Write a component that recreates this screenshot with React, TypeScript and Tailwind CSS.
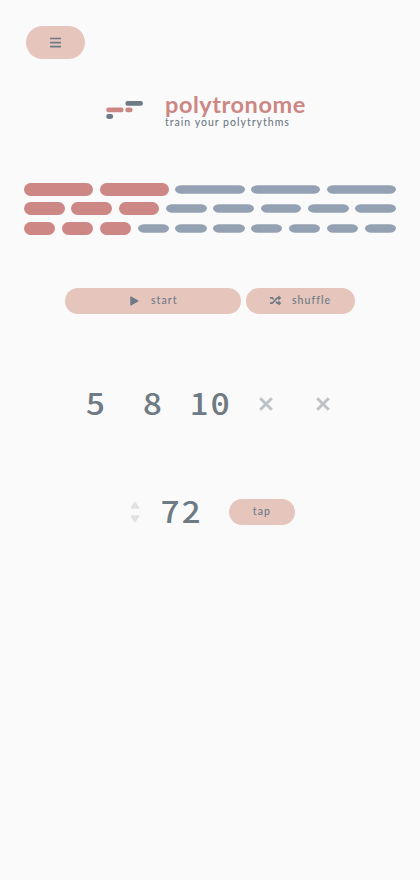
import React from "react";

const beats = [
  { count: 5, active: 2 },
  { count: 8, active: 3 },
  { count: 10, active: 3 },
];

function Logo() {
  return (
    <svg className="mt-[8px] h-[20px] w-[38px] shrink-0" viewBox="0 0 38 20" strokeWidth="4.8" strokeLinecap="round">
      <path d="M21.7 3.4H34.6M2.6 16.5H4.8" stroke="#6e7a85" />
      <path d="M2.6 9.9H15.2M21.7 9.9H24.2" stroke="#cc8784" />
    </svg>
  );
}

function Row({ count, active }: { count: number; active: number }) {
  return (
    <div className="flex h-[13px] gap-[6.6px]">
      {Array.from({ length: count }, (_, i) => (
        <div
          key={i}
          className={
            "h-[13px] flex-1 rounded-full " +
            (i < active ? "bg-[#cd8886]" : "scale-y-[0.64] bg-[#94a1b2]")
          }
        />
      ))}
    </div>
  );
}

function Cross() {
  return (
    <svg className="mr-[2px] h-[14px] w-[14px]" viewBox="0 0 14 14" stroke="#bdc2c7" strokeWidth="2.9" strokeLinecap="butt">
      <path d="M1.2 1.2L12.8 12.8M12.8 1.2L1.2 12.8" />
    </svg>
  );
}

const digits = "font-['Noto_Sans_CJK_JP',sans-serif] font-medium text-[30px] leading-[37px] text-[#6e7a84] ";

export default function App() {
  return (
    <main className="h-[880px] w-full overflow-hidden bg-[#fafafa] font-['Lato',sans-serif] text-[#6e7a85]">
      <button aria-label="menu" className="mt-[26px] ml-[26px] flex h-[33px] w-[59px] items-center justify-center rounded-full bg-[#e6c5bc]">
        <svg className="h-[12px] w-[12px]" viewBox="0 0 12 12" stroke="#6e7a85" strokeWidth="1.7">
          <path d="M0 1.5H11M0 5.6H11M0 9.7H11" />
        </svg>
      </button>

      <header className="mt-[33px] ml-[106px] flex h-[44px]">
        <Logo />
        <div className="ml-[21px] whitespace-nowrap">
          <h1 className="h-[24px] text-[23.5px] leading-[24px] font-bold tracking-[0.55px] text-[#cc8784]">polytronome</h1>
          <p className="text-[10.5px] leading-[13px] font-medium tracking-[1px]">train your polytrythms</p>
        </div>
      </header>

      <section className="mt-[47px] ml-[24px] flex w-[372px] flex-col gap-[6.4px]">
        {beats.map((row) => (
          <Row key={row.count} {...row} />
        ))}
      </section>

      <section className="mt-[53.2px] ml-[65px] flex gap-[5px] text-[10.5px] font-medium tracking-[1.05px]">
        <button className="flex h-[26px] w-[176px] items-center rounded-full bg-[#e6c5bc] pl-[65px]">
          <svg className="h-[10px] w-[9px]" viewBox="0 0 9 10" fill="#6e7a85" stroke="#6e7a85" strokeLinejoin="round">
            <path d="M.8 .8V9.2L8.2 5Z" />
          </svg>
          <span className="ml-[12px]">start</span>
        </button>
        <button className="flex h-[26px] w-[109px] items-center rounded-full bg-[#e6c5bc] pl-[24px]">
          <svg className="h-[11px] w-[11px]" viewBox="0 0 512 512" fill="#6e7a85">
            <path d="M504.971 359.029c9.373 9.373 9.373 24.569 0 33.941l-80 79.984c-15.01 15.01-40.971 4.49-40.971-16.971V416h-58.785a12.004 12.004 0 0 1-8.773-3.812l-70.556-75.596 53.333-57.143L352 336h32v-39.981c0-21.438 25.943-31.998 40.971-16.971l80 79.981zM12 176h84l52.781 56.551 53.333-57.143-70.556-75.596A11.999 11.999 0 0 0 122.785 96H12C5.373 96 0 101.373 0 108v56c0 6.627 5.373 12 12 12zm372 0v39.984c0 21.46 25.961 31.98 40.971 16.971l80-79.984c9.373-9.373 9.373-24.569 0-33.941l-80-79.981C409.943 24.021 384 34.582 384 56.019V96h-58.785a12.004 12.004 0 0 0-8.773 3.812L96 336H12c-6.627 0-12 5.373-12 12v56c0 6.627 5.373 12 12 12h110.785c3.326 0 6.503-1.381 8.773-3.812L352 176h32z" />
          </svg>
          <span className="ml-[11px]">shuffle</span>
        </button>
      </section>

      <section className="mt-[70px] ml-[67px] flex h-[40px]">
        <div className={digits + "w-[57px] scale-x-110 text-center"}>5</div>
        <div className={digits + "w-[57px] scale-x-110 text-center"}>8</div>
        <div className={digits + "flex w-[57px] justify-center"}>
          <span className="w-[20.5px] scale-x-110 text-center">1</span>
          <span className="relative w-[20.5px] scale-x-110 text-center">
            0
            <i className="absolute top-[18.3px] left-[8.2px] h-[4px] w-[4px] rounded-full bg-[#6e7a84]" />
          </span>
        </div>
        <div className="flex w-[57px] items-center justify-center"><Cross /></div>
        <div className="flex w-[57px] items-center justify-center"><Cross /></div>
      </section>

      <section className="mt-[68px] ml-[130px] flex h-[40px] items-center">
        <svg className="h-[22px] w-[10px]" viewBox="0 0 10 22" fill="#dfe1e3" stroke="#dfe1e3" strokeWidth="2" strokeLinejoin="round">
          <path d="M5 1.8L8.2 6.8H1.8ZM5 20.2L8.2 15.2H1.8Z" />
        </svg>
        <div className={digits + "ml-[20px] flex h-[40px]"}>
          <span className="w-[20.5px] scale-x-110 text-center">7</span>
          <span className="w-[20.5px] scale-x-110 text-center">2</span>
        </div>
        <button className="ml-[28px] h-[26px] w-[66px] rounded-full bg-[#e6c5bc] pb-px text-[10.5px] font-medium tracking-[1.1px]">tap</button>
      </section>
    </main>
  );
}
